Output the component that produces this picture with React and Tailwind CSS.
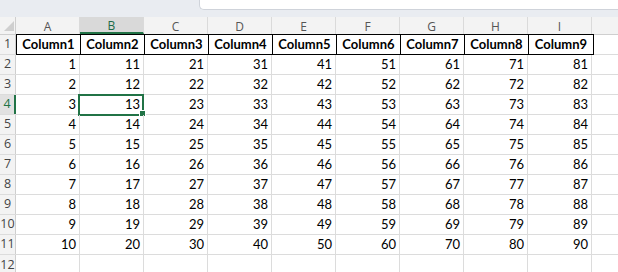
import React from "react";

const cols = ["A", "B", "C", "D", "E", "F", "G", "H", "I"];
const font = { fontFamily: "Lato, 'Open Sans', sans-serif" };

function RowHeader({ n, active }) {
  return (
    <div
      className={`w-[16px] shrink-0 h-full overflow-hidden flex justify-center border-r ${
        active ? "bg-[#e1e1e1] border-r-2 border-r-[#217346] text-[#217346]" : "bg-[#f3f3f3] border-r-[#cfcfcf] text-[#444]"
      }`}
    >
      <div className="w-[12px] shrink-0 flex justify-center items-center text-[12.5px] leading-none whitespace-nowrap" style={{ fontFamily: "'Open Sans', sans-serif" }}>
        {n}
      </div>
    </div>
  );
}

export default function App() {
  const rows = Array.from({ length: 10 }, (_, i) => i + 1);
  return (
    <div className="w-[618px] h-[272px] overflow-hidden bg-white relative" style={font}>
      {/* top bar */}
      <div className="h-[17px] bg-[#e9ecf1] flex">
        <div className="ml-[199px] flex-1 h-[10px] bg-white border-l border-b border-[#cfd3da] rounded-bl-[5px]"></div>
      </div>
      {/* column header row */}
      <div className="h-[18px] flex bg-[#f3f3f3] border-b border-[#cfcfcf]">
        <div className="w-[16px] shrink-0 h-full border-r border-[#cfcfcf] relative">
          <svg className="absolute left-[4px] top-[4px]" width="10" height="10" viewBox="0 0 10 10">
            <polygon points="10,0 10,10 0,10" fill="#cfcfcf" />
          </svg>
        </div>
        {cols.map((c) => (
          <div
            key={c}
            className={`w-[64px] shrink-0 h-full border-r border-[#dadada] flex items-center justify-center pt-[2px] text-[12px] ${
              c === "B" ? "bg-[#d9d9d9] border-b-2 border-b-[#217346] text-[#1d6b48]" : "text-[#555]"
            }`}
            style={{ fontFamily: "'Open Sans', sans-serif" }}
          >
            {c}
          </div>
        ))}
        <div className="flex-1"></div>
      </div>
      {/* row 1 header cells */}
      <div className="h-[20px] flex border-b border-[#dcdcdc]">
        <RowHeader n={1} />
        <div className="flex border border-black -mt-[1px] h-[21px]">
          {cols.map((c, i) => (
            <div
              key={c}
              className={`w-[64px] shrink-0 h-full flex items-center justify-center font-bold text-[13px] text-black ${
                i < 8 ? "border-r border-black" : ""
              } ${i === 0 ? "w-[63px]" : ""}`}
            >
              Column{i + 1}
            </div>
          ))}
        </div>
        <div className="flex-1"></div>
      </div>
      {rows.map((r) => (
        <div key={r} className="h-[20px] flex border-b border-[#dcdcdc]">
          <RowHeader n={r + 1} active={r === 3} />
          {cols.map((c, i) => (
            <div
              key={c}
              className="w-[64px] shrink-0 h-full border-r border-[#dcdcdc] flex items-center justify-end pr-[3px] text-[13px] text-black relative"
            >
              {i * 10 + r}
              {r === 3 && i === 1 && (
                <>
                  <div className="absolute -left-[2px] -top-[1px] w-[66px] h-[22px] border-2 border-[#217346]"></div>
                  <div className="absolute -right-[3px] -bottom-[3px] w-[5px] h-[5px] bg-[#217346] border border-white box-content"></div>
                </>
              )}
            </div>
          ))}
          <div className="flex-1"></div>
        </div>
      ))}
      <div className="h-[20px] flex">
        <RowHeader n={12} />
        {cols.map((c) => (
          <div key={c} className="w-[64px] shrink-0 h-full border-r border-[#dcdcdc]"></div>
        ))}
      </div>
    </div>
  );
}
